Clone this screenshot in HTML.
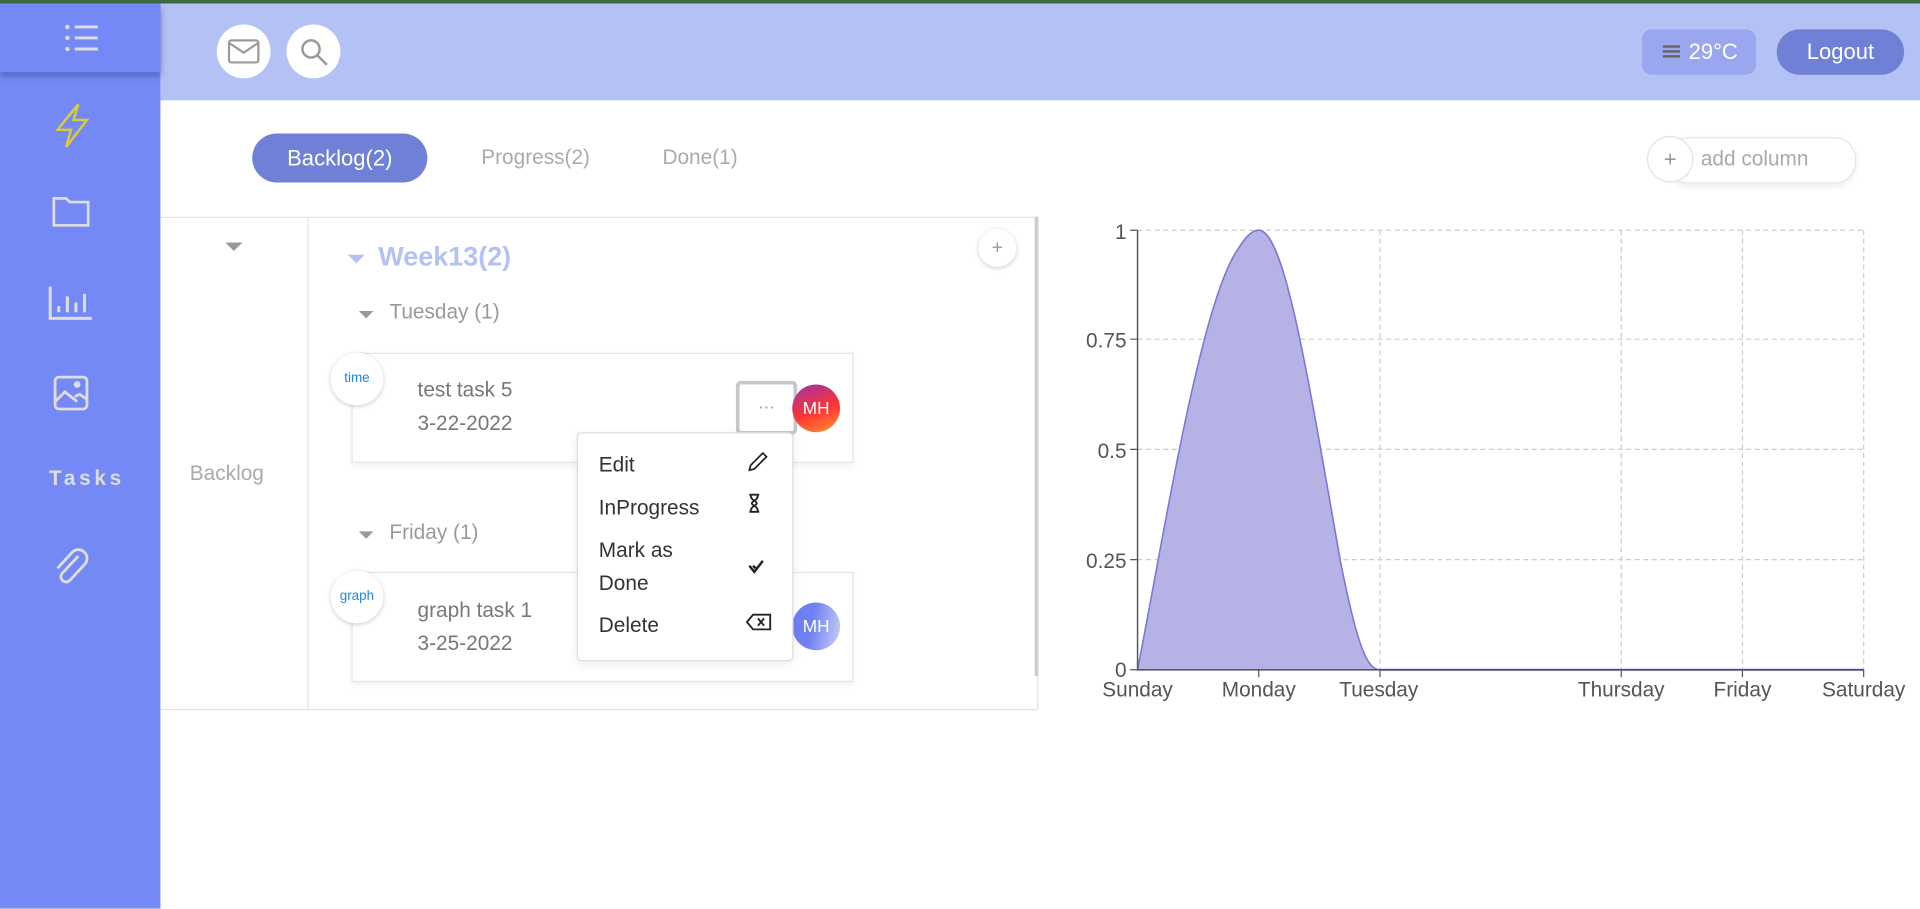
<!DOCTYPE html>
<html><head><meta charset="utf-8"><style>
html,body{margin:0;padding:0;width:1920px;height:908px;overflow:hidden;background:#fff;font-family:"Liberation Sans",sans-serif}
#w{position:absolute;left:0;top:0;width:1568px;height:742px;transform:scale(1.22449);transform-origin:0 0}
.a{position:absolute}
.circ{border-radius:50%;background:#fff}
.t{color:#888;font-size:17px}
</style></head><body><div id="w">
<div class="a" style="left:0;top:0;width:1568px;height:3px;background:#3a6b3e"></div>
<div class="a" style="left:131px;top:3px;width:1437px;height:79px;background:#b4c1f5"></div>
<div class="a" style="left:0;top:3px;width:131px;height:739px;background:#7489f6"></div>
<div class="a" style="left:0;top:3px;width:131px;height:56px;background:#7489f6;box-shadow:0 3px 5px rgba(40,50,120,.45)"></div>
<svg class="a" style="left:40px;top:14px" width="40" height="34" fill="#ddd" stroke="#ddd" stroke-width="2.4"><circle cx="15" cy="8" r="1.8" stroke="none"/><circle cx="15" cy="17" r="1.8" stroke="none"/><circle cx="15" cy="26" r="1.8" stroke="none"/><path d="M21 8H48M21 17H48M21 26H48" transform="translate(0 0)" style="transform:scale(1)" /></svg>
<div class="a" style="left:40px;top:3px;width:0;height:0"></div>
<svg class="a" style="left:42px;top:80px" width="34" height="44" fill="none" stroke="#d8cc3a" stroke-width="2"><path d="M22 5L5 26H16L12 40L29 18H18Z"/></svg>
<svg class="a" style="left:42px;top:160px" width="34" height="28" fill="none" stroke="#ddd" stroke-width="2.2"><path d="M2 2H12L15 5H30V24H2Z"/></svg>
<svg class="a" style="left:39px;top:232px" width="38" height="32" fill="none" stroke="#ddd" stroke-width="2.5"><path d="M2 2V28H36M9 23V18M16 23V10M23 23V15M30 23V8"/></svg>
<svg class="a" style="left:43px;top:306px" width="30" height="32" fill="none" stroke="#ddd" stroke-width="2.3"><rect x="2" y="2" width="26" height="26" rx="3"/><path d="M2 22L10 14L20 22M18 18L22 16L28 20"/><circle cx="20" cy="8" r="1.6" fill="#ddd"/></svg>
<div class="a" style="left:40px;top:381px;color:#ddd;font-weight:bold;font-size:17px;letter-spacing:3px">Tasks</div>
<svg class="a" style="left:42px;top:446px" width="32" height="34" fill="none" stroke="#ddd" stroke-width="2.3"><path d="M22 8L9 22a4 4 0 0 0 6 6L27 15a7 7 0 0 0-10-10L5 18"/></svg>
<div class="a circ" style="left:177px;top:20px;width:44px;height:44px"></div>
<svg class="a" style="left:186px;top:32px" width="26" height="20" fill="none" stroke="#999" stroke-width="1.8"><rect x="1" y="1" width="24" height="18" rx="2"/><path d="M1 3L13 11L25 3"/></svg>
<div class="a circ" style="left:234px;top:20px;width:44px;height:44px"></div>
<svg class="a" style="left:244px;top:30px" width="26" height="26" fill="none" stroke="#999" stroke-width="2"><circle cx="10" cy="10" r="7"/><path d="M15 15L23 23"/></svg>
<div class="a" style="left:1341px;top:24px;width:93px;height:37px;border-radius:8px;background:#9aa6ee"></div>
<div class="a" style="left:1358px;top:37px;width:14px;height:2px;background:#666;box-shadow:0 4px 0 #666,0 8px 0 #666"></div>
<div class="a" style="left:1379px;top:32px;color:#fff;font-size:18px">29°C</div>
<div class="a" style="left:1451px;top:24px;width:104px;height:37px;border-radius:19px;background:#6f80d6;color:#fff;font-size:18px;text-align:center;line-height:37px">Logout</div>
<div class="a" style="left:206px;top:109px;width:143px;height:40px;border-radius:20px;background:#6f80d6;color:#fff;font-size:18px;text-align:center;line-height:40px">Backlog(2)</div>
<div class="a" style="left:393px;top:119px;color:#aaa;font-size:17px">Progress(2)</div>
<div class="a" style="left:541px;top:119px;color:#aaa;font-size:17px">Done(1)</div>
<div class="a" style="left:1360px;top:112px;width:154px;height:36px;border-radius:18px;border:1px solid #e5e5e5;box-shadow:0 2px 5px rgba(0,0,0,.08)"></div>
<div class="a circ" style="left:1345px;top:111px;width:36px;height:36px;border:1px solid #e3e3e3;color:#999;text-align:center;line-height:36px;font-size:18px">+</div>
<div class="a" style="left:1389px;top:120px;color:#aaa;font-size:17px">add column</div>
<div class="a" style="left:131px;top:177px;width:716px;height:401px;border:1px solid #e3e3e3;border-left:none"></div>
<div class="a" style="left:251px;top:177px;width:1px;height:402px;background:#e3e3e3"></div>
<div class="a" style="left:845px;top:177px;width:3px;height:375px;background:#ccc"></div>
<div class="a" style="left:184px;top:198px;border:7px solid transparent;border-top:7px solid #999;border-bottom:0"></div>
<div class="a" style="left:155px;top:377px;color:#aaa;font-size:17px">Backlog</div>
<div class="a circ" style="left:799px;top:187px;width:31px;height:31px;box-shadow:0 1px 4px rgba(0,0,0,.2);color:#999;text-align:center;line-height:31px">+</div>
<div class="a" style="left:284px;top:208px;border:7px solid transparent;border-top:7px solid #b4c1f5;border-bottom:0"></div>
<div class="a" style="left:309px;top:197px;color:#b4c1f5;font-size:22px;font-weight:bold">Week13(2)</div>
<div class="a" style="left:293px;top:254px;border:6px solid transparent;border-top:6px solid #999;border-bottom:0"></div>
<div class="a" style="left:318px;top:245px"><span class="t" style="color:#999">Tuesday (1)</span></div>
<div class="a" style="left:293px;top:434px;border:6px solid transparent;border-top:6px solid #999;border-bottom:0"></div>
<div class="a" style="left:318px;top:425px"><span class="t" style="color:#999">Friday (1)</span></div>
<div class="a" style="left:287px;top:288px;width:408px;height:88px;border:1px solid #e5e5e5;box-shadow:0 3px 6px rgba(0,0,0,.06)"></div>
<div class="a circ" style="left:270px;top:288px;width:43px;height:43px;box-shadow:0 1px 4px rgba(0,0,0,.2);color:#1e88e5;font-size:11px;text-align:center;line-height:43px">time</div>
<div class="a" style="left:341px;top:305px;color:#777;font-size:17px;line-height:27px">test task 5<br>3-22-2022</div>
<div class="a" style="left:601px;top:311px;width:44px;height:38px;border:3px solid #c4c8cc;border-radius:4px;background:#fff;color:#999;text-align:center;line-height:36px;font-size:14px">···</div>
<div class="a circ" style="left:647px;top:314px;width:39px;height:39px;background:linear-gradient(160deg,#9a35a8,#f33 55%,#f93);color:#fff;font-size:14px;text-align:center;line-height:39px">MH</div>
<div class="a" style="left:287px;top:467px;width:408px;height:88px;border:1px solid #e5e5e5;box-shadow:0 3px 6px rgba(0,0,0,.06)"></div>
<div class="a circ" style="left:270px;top:466px;width:43px;height:43px;box-shadow:0 1px 4px rgba(0,0,0,.2);color:#1e88e5;font-size:11px;text-align:center;line-height:43px">graph</div>
<div class="a" style="left:341px;top:485px;color:#777;font-size:17px;line-height:27px">graph task 1<br>3-25-2022</div>
<div class="a circ" style="left:647px;top:492px;width:39px;height:39px;background:linear-gradient(100deg,#6f80f3 40%,#c7cff4);color:#fff;font-size:14px;text-align:center;line-height:39px">MH</div>
<div class="a" style="left:471px;top:353px;width:175px;height:185px;border:1px solid #ddd;border-radius:4px;background:#fff;box-shadow:0 2px 8px rgba(0,0,0,.08)"></div>
<div class="a" style="left:489px;top:362px;color:#333;font-size:17px;line-height:35px">Edit<br>InProgress</div>
<div class="a" style="left:489px;top:436px;color:#333;font-size:17px;line-height:27px">Mark as<br>Done</div>
<div class="a" style="left:489px;top:501px;color:#333;font-size:17px">Delete</div>
<svg class="a" style="left:608px;top:366px" width="22" height="22" fill="none" stroke="#222" stroke-width="1.4"><path d="M4 18L5 14L15 4L18 7L8 17Z"/></svg>
<svg class="a" style="left:610px;top:403px" width="14" height="16" fill="none" stroke="#222" stroke-width="1.5"><path d="M2 1H10M2 15H10M3 1C3 6 8 6 8 8C8 10 3 10 3 15M9 1C9 6 4 6 4 8C4 10 9 10 9 15"/></svg>
<svg class="a" style="left:610px;top:456px" width="16" height="14" fill="none" stroke="#222" stroke-width="2"><path d="M2 6L6 11L13 2M5 6L7 8"/></svg>
<svg class="a" style="left:609px;top:500px" width="22" height="16" fill="none" stroke="#222" stroke-width="1.5"><path d="M6 2H20V14H6L1 8Z M10 5L15 11M15 5L10 11"/></svg>
<svg class="a" style="left:870px;top:170px" width="698" height="410" font-family="Liberation Sans,sans-serif" font-size="17" fill="#555">
<g stroke="#ccc" stroke-dasharray="4 3" stroke-width="1">
<path d="M59 18H652M59 107H652M59 197H652M59 287H652M158 18V377M257 18V377M454 18V377M553 18V377M652 18V377"/></g>
<path d="M59 377C80 270 110 80 140 35C148 22 153 18 158 18C180 18 200 150 225 290C238 355 246 377 257 377Z" fill="#b5b3e6" stroke="#7d78d6" stroke-width="1.3"/>
<path d="M257 377H652" stroke="#9a96e0" stroke-width="2"/>
<path d="M59 18V377H652" stroke="#555" fill="none" stroke-width="1.2"/>
<path d="M53 18H59M53 107H59M53 197H59M53 287H59M53 377H59M158 377V383M257 377V383M454 377V383M553 377V383M652 377V383" stroke="#555"/>
<g text-anchor="end"><text x="50" y="25">1</text><text x="50" y="114">0.75</text><text x="50" y="204">0.5</text><text x="50" y="294">0.25</text><text x="50" y="383">0</text></g>
<g text-anchor="middle"><text x="59" y="399">Sunday</text><text x="158" y="399">Monday</text><text x="256" y="399">Tuesday</text><text x="454" y="399">Thursday</text><text x="553" y="399">Friday</text><text x="652" y="399">Saturday</text></g>
</svg>
</div></body></html>
